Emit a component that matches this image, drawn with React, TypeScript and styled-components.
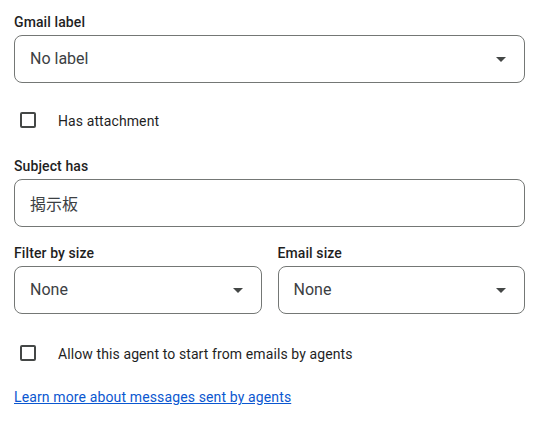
import React from "react";
import styled, { createGlobalStyle } from "styled-components";

const Global = createGlobalStyle`
  html, body { margin: 0; padding: 0; background: #ffffff; }
  body { font-family: Roboto, "Noto Sans CJK JP", "Noto Sans", Arial, sans-serif; }
  * { box-sizing: border-box; }
`;

const Form = styled.div`
  width: 542px;
  padding: 12px 17px 0 14px;
  display: flex;
  flex-direction: column;
`;

const Field = styled.div<{ $mt?: number }>`
  display: flex;
  flex-direction: column;
  margin-top: ${(p) => p.$mt ?? 0}px;
  min-width: 0;
`;

const Label = styled.div`
  font-size: 14px;
  line-height: 20px;
  font-weight: 500;
  color: #1f1f1f;
  margin-bottom: 3px;
  letter-spacing: 0.1px;
`;

const Box = styled.div`
  height: 48px;
  border: 1px solid #747775;
  border-radius: 8px;
  display: flex;
  align-items: center;
  padding: 0 18px 0 15px;
  font-size: 16px;
  color: #3c4043;
  font-family: Roboto, "Noto Sans CJK JP", sans-serif;
`;

const Value = styled.span`
  flex: 1;
  margin-top: -1px;
`;

const Arrow = styled.span`
  width: 0;
  height: 0;
  border-left: 5px solid transparent;
  border-right: 5px solid transparent;
  border-top: 5px solid #444746;
`;

const Pair = styled.div`
  display: grid;
  grid-template-columns: 1fr 1fr;
  column-gap: 16px;
  margin-top: 16px;
`;

const CheckRow = styled.label<{ $mt: number }>`
  display: flex;
  align-items: center;
  height: 40px;
  margin-top: ${(p) => p.$mt}px;
  padding-left: 6px;
  gap: 22px;
  font-size: 14px;
  color: #1f1f1f;
  letter-spacing: 0.1px;
`;

const CheckText = styled.span`
  padding-top: 2px;
`;

const Check = styled.span`
  width: 16px;
  height: 16px;
  border: 2px solid #444746;
  border-radius: 2px;
  flex-shrink: 0;
`;

const Link = styled.a`
  margin-top: 14px;
  font-size: 14px;
  line-height: 20px;
  color: #0b57d0;
  text-decoration: underline;
  align-self: flex-start;
  letter-spacing: 0.13px;
`;

const Select = ({ value }: { value: string }) => (
  <Box>
    <Value>{value}</Value>
    <Arrow />
  </Box>
);

export default function App() {
  return (
    <>
      <Global />
      <Form>
        <Field>
          <Label>Gmail label</Label>
          <Select value="No label" />
        </Field>
        <CheckRow $mt={17}>
          <Check />
          <CheckText>Has attachment</CheckText>
        </CheckRow>
        <Field $mt={16}>
          <Label>Subject has</Label>
          <Box>
            <Value>揭示板</Value>
          </Box>
        </Field>
        <Pair>
          <Field>
            <Label>Filter by size</Label>
            <Select value="None" />
          </Field>
          <Field>
            <Label>Email size</Label>
            <Select value="None" />
          </Field>
        </Pair>
        <CheckRow $mt={19}>
          <Check />
          <CheckText>Allow this agent to start from emails by agents</CheckText>
        </CheckRow>
        <Link href="#">Learn more about messages sent by agents</Link>
      </Form>
    </>
  );
}
